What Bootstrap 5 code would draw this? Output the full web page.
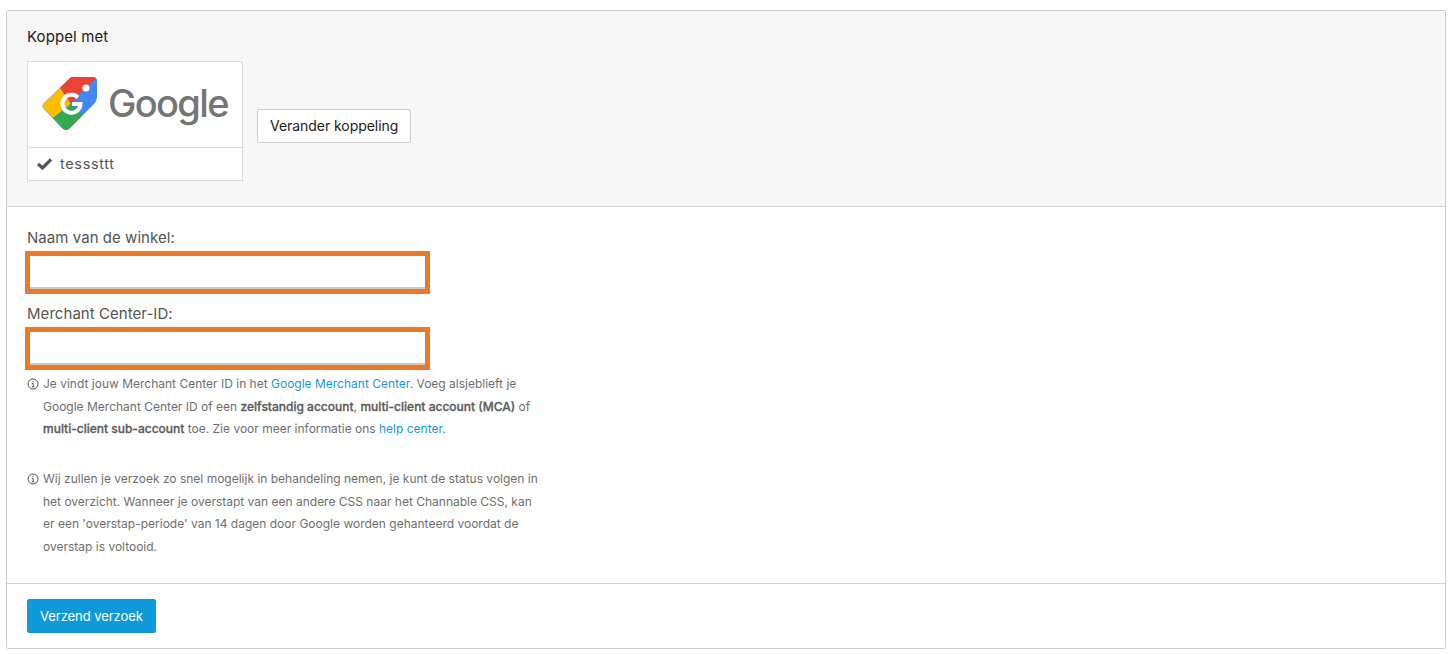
<!DOCTYPE html>
<html lang="nl">
<head>
<meta charset="utf-8">
<title>Koppel met</title>
<link rel="stylesheet" href="https://cdn.jsdelivr.net/npm/bootstrap@5.3.0/dist/css/bootstrap.min.css">
<style>
body { background:#fff; font-family:Inter,"Liberation Sans",sans-serif; font-size:14px; color:#555; }
.shell { margin:10px 6px 5px; border:1px solid #ccc; border-radius:2px; height:639px; }
.shell-head { background:#f7f7f7; border-bottom:1px solid #d5d5d5; padding:16px 20px 0; height:196px; }
.shell-title { color:#222; font-size:15px; line-height:20px; font-weight:400; letter-spacing:.1px; margin-bottom:14px; }
.tile { width:216px; height:120px; border:1px solid #d8d8d8; background:#fff; }
.tile-logo { height:86px; border-bottom:1px solid #d8d8d8; padding-left:14px; gap:10px; }
.logo-word { font-family:Inter,"Liberation Sans",sans-serif; font-weight:500; font-size:38px; letter-spacing:-1.65px; color:#757575; line-height:1; padding-bottom:4px; }
.tile-state { height:32px; padding-left:9px; gap:8px; font-size:14.5px; color:#555; letter-spacing:.65px; }
.swap-btn { margin:9px 0 0 14px; height:34px; background:#fff; border:1px solid #ccc; border-radius:2px; color:#222; font-size:14px; letter-spacing:-.05px; padding:0 12px; }
.shell-body { height:376px; padding:21px 20px 0; }
.field-label { font-size:15px; line-height:20px; letter-spacing:.05px; color:#555; margin:0 0 3px; display:block; }
.field-box { display:block; width:405px; margin-left:-2px; height:43px; border:5px solid #ea7a28; background:#fff; margin-bottom:10px; }
.field-box-last { margin-bottom:3px; }
.field-box-inner { display:block; height:100%; border-bottom:2px solid #c8c8c8; }
.hint { width:512px; font-size:12px; line-height:22.6px; color:#6f6f6f; padding-left:16px; position:relative; margin:0 0 27.4px; }
.hint a { color:#1b9ad6; text-decoration:none; }
.hint b { font-weight:500; color:#5c5c5c; -webkit-text-stroke:.3px #5c5c5c; }
.hint-icon { position:absolute; left:0; top:5px; }
.shell-foot { border-top:1px solid #d5d5d5; padding:15px 20px; }
.send-btn { background:#119ad9; border:1px solid #119ad9; color:#fff; font-size:13px; letter-spacing:-.05px; height:34px; padding:1px 12px 0; border-radius:2px; }
.send-btn:hover { background:#119ad9; color:#fff; }
</style>
</head>
<body>
<div class="shell">
  <div class="shell-head">
    <div class="shell-title">Koppel met</div>
    <div class="d-flex align-items-center">
      <div class="tile">
        <div class="tile-logo d-flex align-items-center">
          <svg width="56" height="56" viewBox="0 0 56 56" aria-hidden="true">
            <path d="M2 26 L28 1 Q29 0 31 0 H51 Q55 0 55 4 V20 Q55 24 52 27 L28 51 Q24 55 20 51 L2 32 Q-1 29 2 26Z" fill="#4285f4"/>
            <path d="M18 11 L28 1 Q29 0 31 0 H51 Q53 0 54 2 L39 15 L29 27Z" fill="#ea4335"/>
            <path d="M18 11 L29 27 L11 41 L2 32 Q-1 29 2 26Z" fill="#fbbc04"/>
            <path d="M11 41 L29 27 L41 38 L28 51 Q24 55 20 51Z" fill="#34a853"/>
            <circle cx="44" cy="11" r="3.5" fill="#fff"/>
            <path d="M36 20.5 A9 9 0 1 0 38.5 27 H30" fill="none" stroke="#fff" stroke-width="4"/>
          </svg>
          <span class="logo-word">Google</span>
        </div>
        <div class="tile-state d-flex align-items-center">
          <svg width="15" height="12" viewBox="0 0 15 12" aria-hidden="true"><path d="M1 6 L5.5 10 L14 1.5" fill="none" stroke="#555" stroke-width="3.2"/></svg>
          <span>tesssttt</span>
        </div>
      </div>
      <button type="button" class="btn swap-btn">Verander koppeling</button>
    </div>
  </div>
  <div class="shell-body">
    <label class="field-label">Naam van de winkel:</label>
    <span class="field-box"><span class="field-box-inner"></span></span>
    <label class="field-label">Merchant Center-ID:</label>
    <span class="field-box field-box-last"><span class="field-box-inner"></span></span>
    <p class="hint">
      <svg class="hint-icon" width="12" height="12" viewBox="0 0 12 12" aria-hidden="true"><circle cx="6" cy="6" r="5" fill="none" stroke="#555"/><path d="M4.8 5.5H6.2V8.8M4.8 8.8H7.4" fill="none" stroke="#555"/><circle cx="6" cy="3.6" r=".7" fill="#555"/></svg>
      Je vindt jouw Merchant Center ID in het <a href="#">Google Merchant Center</a>. Voeg alsjeblieft je Google Merchant Center ID of een <b>zelfstandig account</b>, <b>multi-client account (MCA)</b> of <b>multi-client sub-account</b> toe. Zie voor meer informatie ons <a href="#">help center</a>.
    </p>
    <p class="hint">
      <svg class="hint-icon" width="12" height="12" viewBox="0 0 12 12" aria-hidden="true"><circle cx="6" cy="6" r="5" fill="none" stroke="#555"/><path d="M4.8 5.5H6.2V8.8M4.8 8.8H7.4" fill="none" stroke="#555"/><circle cx="6" cy="3.6" r=".7" fill="#555"/></svg>
      Wij zullen je verzoek zo snel mogelijk in behandeling nemen, je kunt de status volgen in het overzicht. Wanneer je overstapt van een andere CSS naar het Channable CSS, kan er een 'overstap-periode' van 14 dagen door Google worden gehanteerd voordat de overstap is voltooid.
    </p>
  </div>
  <div class="shell-foot">
    <button type="button" class="btn send-btn">Verzend verzoek</button>
  </div>
</div>
<script src="https://cdn.jsdelivr.net/npm/bootstrap@5.3.0/dist/js/bootstrap.bundle.min.js"></script>
</body>
</html>
